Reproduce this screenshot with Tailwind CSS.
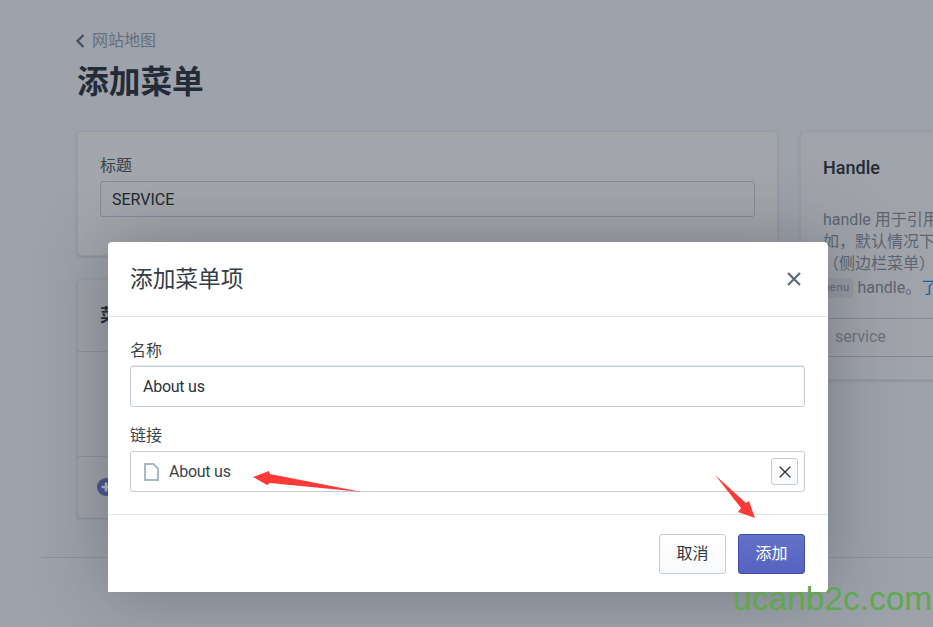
<!DOCTYPE html>
<html lang="zh-CN">
  <head>
    <meta charset="UTF-8" />
    <meta name="viewport" content="width=device-width, initial-scale=1.0" />
    <title>添加菜单</title>
    <script src="https://cdn.jsdelivr.net/npm/@tailwindcss/browser@4"></script>
  </head>
  <body class="relative h-[627px] w-[933px] overflow-hidden bg-[#9da2ab] font-['Roboto','Noto_Sans_CJK_SC',sans-serif] text-[#212b36]">
    <!-- page behind the modal -->
    <div class="pl-[77px] pt-[30px]">
      <a class="flex h-[22px] items-center text-[16px] leading-[22px] text-[#64707d]">
        <svg class="mr-[6px] -ml-[3px] h-[16px] w-[12px]" viewBox="0 0 12 16" fill="none" stroke="#47535f" stroke-width="2.4">
          <path d="M9.5 2 3.5 8l6 6" />
        </svg>
        网站地图
      </a>
      <h1 class="mt-[10px] h-[42px] text-[31.7px] font-bold leading-[42px] text-[#222b36]">添加菜单</h1>

      <div class="mt-[27px] flex gap-[22px]">
        <div class="w-[701px] shrink-0">
          <div class="h-[125px] rounded-[4px] border border-[#989ca4] bg-[#a3a6ab] px-[22px] pt-[23px] shadow-sm">
            <label class="block text-[16px] leading-[22px] text-[#3b424b]">标题</label>
            <div class="mt-[4px] flex h-[36px] items-center rounded-[3px] border border-[#858b99] bg-[#a3a6ab] px-[11px] pt-[1px] text-[16px] text-[#20262e]">SERVICE</div>
          </div>
          <div class="mt-[23px] h-[239px] rounded-[4px] border border-[#989ca4] bg-[#a0a3a9] shadow-sm">
            <div class="flex h-[72px] items-center border-b border-[#8f939c] pl-[22px] text-[18px] font-bold">菜单</div>
            <div class="h-[105px] border-b border-[#8f939c]"></div>
            <div class="flex h-[60px] items-center pl-[19px]">
              <svg class="h-[18px] w-[18px]" viewBox="0 0 18 18">
                <circle cx="9" cy="9" r="9" fill="#48548f" />
                <path d="M9 4.5v9M4.5 9h9" stroke="#b9bdc8" stroke-width="2.6" />
              </svg>
            </div>
          </div>
        </div>

        <div class="h-[249px] w-[400px] shrink-0 rounded-[4px] border border-[#989ca4] bg-[#a0a3aa] shadow-sm">
          <h2 class="pl-[22px] pt-[24px] text-[18px] font-medium leading-[24px] text-[#222b36]">Handle</h2>
          <div class="pl-[22px] pt-[29px] text-[16px] leading-[22px] whitespace-nowrap text-[#5c6570]">
            <p>handle 用于引用</p>
            <p>如，默认情况下</p>
            <p>（侧边栏菜单）</p>
            <p class="mt-[2px] flex items-center">
              <code class="-ml-[4px] mr-[4px] rounded-[2px] bg-[#979aa0] px-[4px] font-['Liberation_Mono',monospace] text-[11px] leading-[20px]">menu</code>
              <span>handle。</span><span class="text-[#0b5ea8]">了</span>
            </p>
          </div>
          <div class="mt-[19px] flex h-[39px] items-center border-y border-[#858b96] pb-[2px] pl-[34px] text-[16px] text-[#6b727c]">service</div>
        </div>
      </div>
    </div>
    <div class="absolute top-[557px] left-[41px] right-0 border-t border-[#8e929b]"></div>

    <!-- modal -->
    <div class="absolute top-[242px] left-[108px] h-[350px] w-[720px] rounded-t-[4px] bg-white shadow-[0_0_70px_rgba(40,45,55,0.35)]">
      <div class="flex h-[75px] items-center justify-between border-b border-[#dfe3e8] pl-[22px] pr-[27px]">
        <h2 class="pt-[2px] text-[22.7px] leading-[32px] text-[#333c47]">添加菜单项</h2>
        <svg class="h-[14px] w-[14px]" viewBox="0 0 14 14" stroke="#5c6a78" stroke-width="2.2">
          <path d="M1 1 13 13M13 1 1 13" />
        </svg>
      </div>
      <div class="h-[198px] border-b border-[#dfe3e8] pl-[22px] pr-[23px] pt-[23px]">
        <label class="block text-[16px] leading-[22px] text-[#3a434d]">名称</label>
        <div class="mt-[4px] flex h-[41px] items-center rounded-[3px] border border-[#c4cdd5] px-[12px] text-[16px] tracking-[-0.25px] text-[#2b333d] shadow-[0_-1px_0_#e6e9ef]">About us</div>
        <label class="mt-[18px] block text-[16px] leading-[22px] text-[#3a434d]">链接</label>
        <div class="mt-[4px] flex h-[41px] items-center rounded-[3px] border border-[#c4cdd5] pl-[13px] pr-[6px] text-[16px] tracking-[-0.25px] text-[#3a434d]">
          <svg class="h-[18px] w-[15px]" viewBox="0 0 15 18" fill="none" stroke="#a7b8c9" stroke-width="2">
            <path d="M1 1h8.5L14 5.5V17H1Z" />
          </svg>
          <span class="ml-[10px]">About us</span>
          <button class="ml-auto flex h-[27px] w-[27px] items-center justify-center rounded-[3px] border border-[#c4cdd5] bg-gradient-to-b from-white to-[#f9fafb]">
            <svg class="h-[12px] w-[12px]" viewBox="0 0 12 12" stroke="#2b333d" stroke-width="1.3">
              <path d="M.7.7l10.6 10.6M11.3.7.7 11.3" />
            </svg>
          </button>
        </div>
      </div>
      <div class="flex justify-end gap-[12px] pr-[23px] pt-[19px]">
        <button class="h-[40px] w-[67px] rounded-[3px] border border-[#c4cdd5] bg-gradient-to-b from-white to-[#f9fafb] text-[16px] text-[#2f3740]">取消</button>
        <button class="h-[40px] w-[67px] rounded-[3px] border border-[#3f4eae] bg-gradient-to-b from-[#6371c7] to-[#5563c1] text-[16px] text-white">添加</button>
      </div>
    </div>

    <!-- annotation arrows drawn on top of the screenshot -->
    <svg class="absolute inset-0 h-[627px] w-[933px]" viewBox="0 0 933 627" fill="#fd3a38">
      <polygon points="253,477 269,471 270,474 362,492 270,483 267,485" />
      <polygon points="715,475 746,503 749,501 755,518 738,512 741,508" />
    </svg>

    <div class="absolute top-[577px] left-[733px] font-['Liberation_Sans',sans-serif] text-[33.5px] leading-[44px] whitespace-nowrap text-[#5fa84e]">ucanb2c.com</div>
  </body>
</html>
